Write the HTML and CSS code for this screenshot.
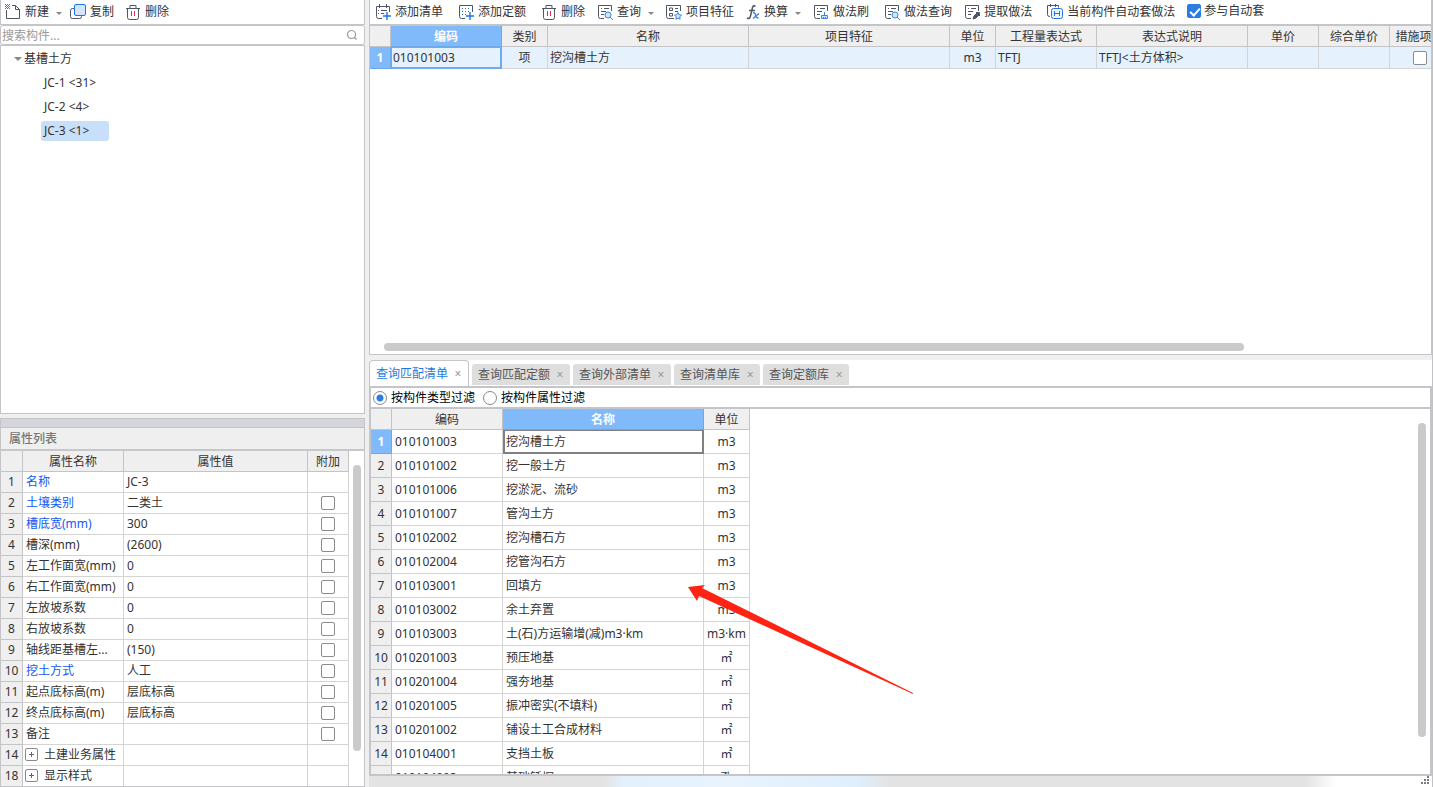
FILE: index.html
```
<!DOCTYPE html>
<html lang="zh-CN">
<head>
<meta charset="utf-8">
<title>构件做法</title>
<link rel="stylesheet" href="styles.css">
</head>
<body>
<svg class="defs" aria-hidden="true">
  <symbol id="trash" viewBox="0 0 16 16"><g fill="none" stroke="#4d5566"><path d="M1 4.500h14M5 4V1.500h6V4M2.500 5v8.500q0 2 2 2h7q2 0 2-2V5"/><path stroke="#e0323c" d="M6.500 7v5M9.500 7v5"/></g></symbol>
  <symbol id="form" viewBox="0 0 16 16"><path fill="none" stroke="#4d5566" d="M7 14.500H3.500q-2 0-2-2v-11h13V7M4 4.500h1M7 4.500h5M4 7.500h5M4 10.500h3"/></symbol>
</svg>
<div class="app">
  <aside class="left">
    <div class="toolbar panel-side">
      <button class="tool"><svg viewBox="0 0 16 16"><path fill="none" stroke="#4d5566" d="M1.500 6v8.500h13V5.500L10.500 1.500H7M10.500 1.500v4h4"/><path fill="none" stroke="#2f7de0" stroke-dasharray="1 1" d="M0 .5h5M1 1.500h4M0 2.500h5M1 3.500h4M0 4.500h5"/></svg>新建<i class="caret"></i></button>
      <button class="tool"><svg viewBox="0 0 16 16"><path fill="none" stroke="#4d5566" d="M4 4.500H2.500q-2 0-2 2v6q0 2 2 2h7q2 0 2-2V12"/><rect x="4.500" y=".5" width="11" height="11" rx="1.500" fill="#d3e4fb" stroke="#1f75e6"/></svg>复制</button>
      <button class="tool"><svg><use href="#trash"/></svg>删除</button>
    </div>
    <label class="search"><input type="text" placeholder="搜索构件..." aria-label="搜索构件"><svg viewBox="0 0 12 12"><circle cx="5.500" cy="5.500" r="4" fill="none" stroke="#999" stroke-width="1.200"/><path stroke="#999" stroke-width="1.300" d="M8.500 8.500l2 2"/></svg></label>
    <div class="tree">
      <div class="node root"><i class="caret open"></i>基槽土方</div>
      <ul>
        <li class="node"><span>JC-1 &lt;31&gt;</span></li>
        <li class="node"><span>JC-2 &lt;4&gt;</span></li>
        <li class="node"><span class="selected">JC-3 &lt;1&gt;</span></li>
      </ul>
    </div>
    <section class="props">
      <div class="strip"></div>
      <h2>属性列表</h2>
      <div class="props-body">
        <table class="grid props-grid">
          <colgroup><col class="w22"><col class="w101"><col><col class="w41"></colgroup>
          <thead><tr><th></th><th>属性名称</th><th>属性值</th><th>附加</th></tr></thead>
          <tbody>
            <tr><th>1</th><td class="key">名称</td><td>JC-3</td><td></td></tr>
            <tr><th>2</th><td class="key">土壤类别</td><td>二类土</td><td class="mid"><input type="checkbox" aria-label="附加 土壤类别"></td></tr>
            <tr><th>3</th><td class="key">槽底宽(mm)</td><td>300</td><td class="mid"><input type="checkbox" aria-label="附加 槽底宽"></td></tr>
            <tr><th>4</th><td>槽深(mm)</td><td>(2600)</td><td class="mid"><input type="checkbox" aria-label="附加 槽深"></td></tr>
            <tr><th>5</th><td>左工作面宽(mm)</td><td>0</td><td class="mid"><input type="checkbox" aria-label="附加 左工作面宽"></td></tr>
            <tr><th>6</th><td>右工作面宽(mm)</td><td>0</td><td class="mid"><input type="checkbox" aria-label="附加 右工作面宽"></td></tr>
            <tr><th>7</th><td>左放坡系数</td><td>0</td><td class="mid"><input type="checkbox" aria-label="附加 左放坡系数"></td></tr>
            <tr><th>8</th><td>右放坡系数</td><td>0</td><td class="mid"><input type="checkbox" aria-label="附加 右放坡系数"></td></tr>
            <tr><th>9</th><td>轴线距基槽左...</td><td>(150)</td><td class="mid"><input type="checkbox" aria-label="附加 轴线距基槽左"></td></tr>
            <tr><th>10</th><td class="key">挖土方式</td><td>人工</td><td class="mid"><input type="checkbox" aria-label="附加 挖土方式"></td></tr>
            <tr><th>11</th><td>起点底标高(m)</td><td>层底标高</td><td class="mid"><input type="checkbox" aria-label="附加 起点底标高"></td></tr>
            <tr><th>12</th><td>终点底标高(m)</td><td>层底标高</td><td class="mid"><input type="checkbox" aria-label="附加 终点底标高"></td></tr>
            <tr><th>13</th><td>备注</td><td></td><td class="mid"><input type="checkbox" aria-label="附加 备注"></td></tr>
            <tr><th>14</th><td class="group"><button class="expand" aria-label="展开 土建业务属性"></button>土建业务属性</td><td></td><td></td></tr>
            <tr><th>18</th><td class="group"><button class="expand" aria-label="展开 显示样式"></button>显示样式</td><td></td><td></td></tr>
          </tbody>
        </table>
        <div class="vtrack"><div class="thumb"></div></div>
      </div>
    </section>
  </aside>

  <main class="right">
    <section class="upper">
      <div class="toolbar">
        <button class="tool"><svg viewBox="0 0 16 16"><path fill="none" stroke="#4d5566" d="M7 14.500H3.500q-2 0-2-2v-10h13V8M4.500 0v4M11.500 0v4M3 6.500h1M6 6.500h6M3 9.500h1M6 9.500h3"/><path stroke="#1f75e6" stroke-width="1.400" d="M12 8v8M8 12h8"/></svg>添加清单</button>
        <button class="tool"><svg viewBox="0 0 16 16"><path fill="none" stroke="#4d5566" d="M7 14.500H3.500q-2 0-2-2v-11h13V8"/><path stroke="#1f75e6" stroke-dasharray="1 2" d="M4 4.500h8M4 7.500h8M4 10.500h4"/><path stroke="#1f75e6" stroke-width="1.400" d="M12 8v8M8 12h8"/></svg>添加定额</button>
        <button class="tool near"><svg><use href="#trash"/></svg>删除</button>
        <button class="tool near"><svg viewBox="0 0 16 16"><use href="#form"/><g fill="#d3e4fb" stroke="#3c85e6"><circle cx="11" cy="11" r="3"/><path d="M13 13l3 3"/></g></svg>查询<i class="caret"></i></button>
        <button class="tool near"><svg viewBox="0 0 16 16"><path fill="none" stroke="#4d5566" d="M8 14.500H2.500q-2 0-2-2v-11h14V7M9 4.500h3M9 7.500h3M3.500 4h3v2.500h-3zM3.500 9.500h3V12h-3z"/><path fill="#d3e4fb" stroke="#3c85e6" d="M12 8.500l1.200 2.200 2.300.4-1.700 1.700.3 2.400-2.100-1-2.100 1 .3-2.400-1.700-1.700 2.300-.4z"/></svg>项目特征</button>
        <button class="tool near fx"><svg viewBox="0 0 14 16"><path fill="none" stroke="#4d5566" stroke-width="1.500" d="M9.500 2.500Q7.500.5 6.500 3.500L4.500 12q-.8 3.500-3.500 2M3 6.500h6"/><path stroke="#3c85e6" stroke-width="1.500" fill="none" d="M7 9q2-1 2.500 2t3 3M13 9.500L7 14.500"/></svg>换算<i class="caret"></i></button>
        <button class="tool"><svg viewBox="0 0 16 16"><use href="#form"/><path fill="#d3e4fb" stroke="#3c85e6" d="M11.500 8v3M8.500 11.500h6v3h-6zM10.500 13v2M12.500 13v2"/></svg>做法刷</button>
        <button class="tool near"><svg viewBox="0 0 16 16"><use href="#form"/><g fill="#d3e4fb" stroke="#3c85e6"><circle cx="11" cy="11" r="3"/><path d="M13 13l3 3"/></g></svg>做法查询</button>
        <button class="tool"><svg viewBox="0 0 16 16"><use href="#form"/><path fill="#4d5566" stroke="#4d5566" d="M9 15l1-3 3-3 2 2-3 3zM12 8.500h3.500V12"/></svg>提取做法</button>
        <button class="tool near"><svg viewBox="0 0 16 16"><path fill="none" stroke="#4d5566" d="M3 12.500H2.500q-2 0-2-2v-9h11v2M3.500 0v3M8.500 0v3"/><rect x="4.500" y="4.500" width="11" height="10" rx="2" fill="#edf4ff" stroke="#1f75e6"/><path stroke="#1f75e6" d="M7.500 7v5M12.500 7v5M7.500 9.500h5"/></svg>当前构件自动套做法</button>
        <label class="auto"><input type="checkbox" checked>参与自动套</label>
      </div>
      <div class="clip">
        <table class="grid items-grid">
          <colgroup><col class="w21"><col class="w111"><col class="w46"><col class="w201"><col class="w201"><col class="w46"><col class="w101"><col class="w151"><col class="w71"><col class="w71"><col class="w60"></colgroup>
          <thead><tr><th></th><th class="hot">编码</th><th>类别</th><th>名称</th><th>项目特征</th><th>单位</th><th>工程量表达式</th><th>表达式说明</th><th>单价</th><th>综合单价</th><th>措施项目</th></tr></thead>
          <tbody><tr><th class="hot">1</th><td class="focus-blue">010101003</td><td class="mid">项</td><td>挖沟槽土方</td><td></td><td class="mid">m3</td><td>TFTJ</td><td>TFTJ&lt;土方体积&gt;</td><td></td><td></td><td class="mid"><input type="checkbox" aria-label="措施项目"></td></tr></tbody>
        </table>
      </div>
      <div class="htrack"><div class="thumb"></div></div>
    </section>

    <section class="lower">
      <nav class="tabs">
        <div class="tab active"><button>查询匹配清单</button><button class="close" aria-label="关闭">×</button></div>
        <div class="tab"><button>查询匹配定额</button><button class="close" aria-label="关闭">×</button></div>
        <div class="tab"><button>查询外部清单</button><button class="close" aria-label="关闭">×</button></div>
        <div class="tab"><button>查询清单库</button><button class="close" aria-label="关闭">×</button></div>
        <div class="tab"><button>查询定额库</button><button class="close" aria-label="关闭">×</button></div>
      </nav>
      <div class="filters">
        <label><input type="radio" name="filter" checked>按构件类型过滤</label>
        <label><input type="radio" name="filter">按构件属性过滤</label>
      </div>
      <div class="results">
        <div class="clip">
          <table class="grid match-grid">
            <colgroup><col class="w21"><col class="w111"><col class="w201"><col class="w46"></colgroup>
            <thead><tr><th></th><th>编码</th><th class="hot">名称</th><th>单位</th></tr></thead>
            <tbody>
              <tr><th class="hot">1</th><td>010101003</td><td class="focus-gray">挖沟槽土方</td><td class="mid">m3</td></tr>
              <tr><th>2</th><td>010101002</td><td>挖一般土方</td><td class="mid">m3</td></tr>
              <tr><th>3</th><td>010101006</td><td>挖淤泥、流砂</td><td class="mid">m3</td></tr>
              <tr><th>4</th><td>010101007</td><td>管沟土方</td><td class="mid">m3</td></tr>
              <tr><th>5</th><td>010102002</td><td>挖沟槽石方</td><td class="mid">m3</td></tr>
              <tr><th>6</th><td>010102004</td><td>挖管沟石方</td><td class="mid">m3</td></tr>
              <tr><th>7</th><td>010103001</td><td>回填方</td><td class="mid">m3</td></tr>
              <tr><th>8</th><td>010103002</td><td>余土弃置</td><td class="mid">m3</td></tr>
              <tr><th>9</th><td>010103003</td><td>土(石)方运输增(减)m3·km</td><td class="mid">m3·km</td></tr>
              <tr><th>10</th><td>010201003</td><td>预压地基</td><td class="mid">㎡</td></tr>
              <tr><th>11</th><td>010201004</td><td>强夯地基</td><td class="mid">㎡</td></tr>
              <tr><th>12</th><td>010201005</td><td>振冲密实(不填料)</td><td class="mid">㎡</td></tr>
              <tr><th>13</th><td>010201002</td><td>铺设土工合成材料</td><td class="mid">㎡</td></tr>
              <tr><th>14</th><td>010104001</td><td>支挡土板</td><td class="mid">㎡</td></tr>
              <tr><th></th><td>010104003</td><td>基础钎探</td><td class="mid">孔</td></tr>
            </tbody>
          </table>
          <svg class="pointer" viewBox="0 0 226 110" aria-hidden="true"><path fill="#ff2313" d="M0 2l17-2-3 3 211 105v1L11 11l-2 5z"/></svg>
        </div>
        <div class="vtrack"><div class="thumb"></div></div>
      </div>
      <footer class="status"><svg viewBox="0 0 9 9" aria-hidden="true"><path fill="#777c88" d="M6 0h2v2H6zM3 3h2v2H3zM6 3h2v2H6zM0 6h2v2H0zM3 6h2v2H3zM6 6h2v2H6z"/></svg></footer>
    </section>
  </main>
</div>
</body>
</html>
```
FILE: styles.css
```
* { box-sizing: border-box; }
body {
  margin: 0;
  background: #efefef;
  color: #333;
  font: 12px/18px "Noto Sans", "Noto Sans CJK SC", sans-serif;
}
button, input { font: inherit; color: inherit; margin: 0; }
button { padding: 0; border: 0; background: none; white-space: nowrap; }
ul { margin: 0; padding: 0; list-style: none; }
.defs { display: none; }

.app {
  display: grid;
  grid-template-columns: 365px minmax(0, 1fr);
  grid-template-rows: minmax(0, 1fr);
  column-gap: 4px;
  height: 100vh;
  overflow: hidden;
  border-right: 1px solid #c2c2c5;
}
.left { display: flex; flex-direction: column; min-height: 0; }
.right {
  display: grid;
  grid-template-columns: minmax(0, 1fr);
  grid-template-rows: minmax(0, 355fr) minmax(0, 427fr);
  row-gap: 5px;
  min-width: 0;
  min-height: 0;
}

/* toolbars */
.toolbar {
  display: flex;
  align-items: center;
  gap: 15px;
  height: 26px;
  flex: none;
  padding: 0 6px 0 5px;
  background: #fff;
  border-bottom: 2px solid #c5c5c8;
}
.panel-side { gap: 8px; padding-left: 4px; border: 1px solid #c5c5c8; border-top: 0; height: 25px; }
.tool { display: flex; align-items: center; gap: 4px; flex: none; }
.tool svg { width: 16px; height: 16px; flex: none; }
.tool.near { margin-right: -3px; }
.panel-side .tool + .tool + .tool { margin-left: 3px; }
.fx svg { width: 14px; }
.caret {
  margin: 2px 0 0 3px;
  border: 3px solid transparent;
  border-top-color: #888;
  border-bottom: 0;
}
.auto { display: flex; align-items: center; gap: 3px; flex: none; padding-bottom: 3px; }

/* tick boxes and radios */
input[type="checkbox"] {
  appearance: none;
  display: block;
  width: 14px;
  height: 14px;
  border: 1px solid #8c8c8c;
  border-radius: 2px;
  background: #fff;
}
input[type="checkbox"]:checked { position: relative; border-color: #2b7de1; background: #2b7de1; }
input[type="checkbox"]:checked::after {
  content: "";
  position: absolute;
  left: 4px;
  top: 1px;
  width: 4px;
  height: 8px;
  border: solid #fff;
  border-width: 0 2px 2px 0;
  transform: rotate(42deg);
}
input[type="radio"] {
  appearance: none;
  width: 14px;
  height: 14px;
  border: 1px solid #888;
  border-radius: 50%;
  background: #fff;
}
input[type="radio"]:checked { background: radial-gradient(circle, #2b7de1 3px, #fff 4px); }

/* search and tree */
.search {
  display: flex;
  align-items: center;
  height: 20px;
  flex: none;
  padding: 0 6px 0 0;
  background: #fff;
  border: 1px solid #c5c5c8;
  border-radius: 3px;
}
.search input { flex: 1; min-width: 0; padding: 2px 1px 0; border: 0; outline: 0; background: none; }
.search input::placeholder { color: #999; }
.search svg { width: 12px; height: 12px; }
.tree {
  flex: 1;
  min-height: 0;
  overflow: hidden;
  background: #fff;
  border: 1px solid #c5c5c8;
  padding-top: 1px;
}
.node { display: flex; align-items: center; height: 24px; padding-left: 40px; }
.node.root { padding-left: 13px; }
.node span { padding: 1px 20px 1px 3px; border-radius: 3px; }
.node .selected { background: #c8dffa; }
.caret.open { margin: 0 2px 0 0; border-width: 4px 4px 0; }

/* grids */
.grid { table-layout: fixed; border-spacing: 0; }
.grid th, .grid td {
  height: 21px;
  padding: 0 3px;
  overflow: hidden;
  white-space: nowrap;
  text-align: left;
  border: solid #d4d4d4;
  border-width: 0 1px 1px 0;
}
.grid th {
  padding: 0;
  font-weight: 400;
  text-align: center;
  background: #efefef;
  border-color: #c4c4c7;
}
.grid thead th { padding-top: 2px; }
.grid th.hot { background: #81bafa; border-color: #6aa9ec; color: #fff; font-weight: 700; }
.grid .mid { padding: 0; text-align: center; }
.mid input { margin: 0 auto; }
.w21 { width: 21px; } .w22 { width: 22px; } .w41 { width: 41px; } .w46 { width: 46px; }
.w60 { width: 60px; } .w71 { width: 71px; } .w101 { width: 101px; } .w111 { width: 111px; }
.w151 { width: 151px; } .w201 { width: 201px; }
.clip { position: relative; overflow: hidden; flex: 1; min-width: 0; min-height: 0; }
.thumb { border-radius: 4px; background: #cacaca; }
.vtrack { width: 8px; flex: none; }
.vtrack .thumb { height: 100%; }

/* property list */
.props { flex: none; margin-top: 4px; border: 1px solid #c5c5c8; }
.strip { height: 9px; background: #d3d5da; border-bottom: 1px solid #c2c4ca; }
.props h2 {
  margin: 0;
  padding: 2px 8px 1px;
  font-size: 12px;
  line-height: 18px;
  font-weight: 500;
  color: #777;
  border-bottom: 2px solid #c5c7cb;
}
.props-body { display: flex; background: #fff; }
.props-grid { flex: 1; min-width: 0; }
.props-body .vtrack { padding: 14px 0 35px; margin: 0 3px 0 4px; }
.props-grid .key { color: #0f5af5; }
.props-grid tr:last-child td, .props-grid tbody tr:last-child th { height: 20px; border-bottom: 0; }
.expand {
  display: inline-block;
  vertical-align: -1px;
  width: 13px;
  height: 13px;
  margin-right: 6px;
  border: 1px solid #888;
  border-radius: 2px;
  background:
    linear-gradient(#666, #666) center / 5px 1px no-repeat,
    linear-gradient(#666, #666) center / 1px 5px no-repeat,
    #fff;
}
.grid .group { padding-left: 2px; }

/* item list */
.upper {
  display: flex;
  flex-direction: column;
  min-height: 0;
  background: #fff;
  border: 1px solid #c5c5c8;
  border-top: 0;
}
.items-grid { width: 1080px; }
.items-grid td { height: 22px; padding: 0 2px; background: #e5f2fe; }
.grid .focus-blue { padding-left: 1px; border: 2px solid #6eacf0; border-width: 1px 2px 2px 1px; }
.htrack { padding: 0 187px 3px 14px; }
.htrack .thumb { height: 8px; }

/* query panel */
.lower { display: flex; flex-direction: column; min-height: 0; background: #fff; }
.tabs { display: flex; align-items: flex-end; gap: 3px; height: 26px; flex: none; }
.tab {
  display: flex;
  align-items: center;
  gap: 6px;
  height: 21px;
  margin-bottom: 1px;
  padding: 0 6px;
  border-radius: 3px 3px 0 0;
  background: #dedede;
  color: #555;
}
.tab.active {
  height: 26px;
  margin: 0;
  border: 1px solid #c5c5c8;
  border-bottom: 0;
  border-radius: 4px 4px 0 0;
  background: #fff;
  color: #1f7ae0;
}
.tab .close { width: 8px; color: #999; }
.filters {
  display: flex;
  align-items: center;
  gap: 8px;
  height: 23px;
  flex: none;
  padding: 0 2px;
  color: #000;
  border: 2px solid #c3c5ca;
}
.filters label { display: flex; align-items: center; gap: 4px; }
.results {
  display: flex;
  flex: 1;
  min-height: 0;
  border: 2px solid #c5c5c8;
  border-top: 0;
}
.match-grid { width: 379px; }
.match-grid tbody > tr > * { height: 24px; }
.grid .focus-gray {
  padding-left: 2px;
  border: 2px solid #808080;
  border-width: 1px 1px 2px;
  box-shadow: inset -1px 0 #808080, inset 1px 0 #808080;
}
.results .vtrack { padding: 14px 0 37px; margin-right: 4px; }
.pointer { position: absolute; left: 317px; top: 176px; width: 226px; height: 110px; }
.status {
  display: flex;
  justify-content: flex-end;
  flex: none;
  height: 11px;
  padding-right: 2px;
  background:
    linear-gradient(90deg, transparent 22%, #e3f1fd 24%, #e8f3fd 34%, #dfeffc 46%, transparent 49%),
    linear-gradient(90deg, #e3e3e3 88%, #fff 91%);
}
.status svg { width: 9px; height: 9px; }
```
